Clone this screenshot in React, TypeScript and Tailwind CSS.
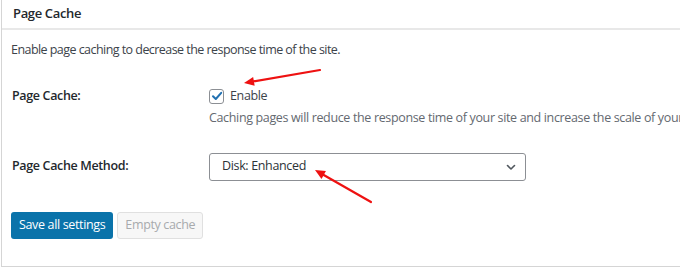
import React from "react";

function Arrow({ x1, y1, x2, y2 }: { x1: number; y1: number; x2: number; y2: number }) {
  // arrowhead at (x2, y2)
  const ang = Math.atan2(y2 - y1, x2 - x1);
  const len = 11;
  const spread = 0.42;
  const ax = x2 - len * Math.cos(ang - spread);
  const ay = y2 - len * Math.sin(ang - spread);
  const bx = x2 - len * Math.cos(ang + spread);
  const by = y2 - len * Math.sin(ang + spread);
  return (
    <g>
      <line x1={x1} y1={y1} x2={x2 - 6 * Math.cos(ang)} y2={y2 - 6 * Math.sin(ang)} stroke="#ee1111" strokeWidth={2.2} strokeLinecap="round" />
      <polygon points={`${x2},${y2} ${ax},${ay} ${bx},${by}`} fill="#ee1111" />
    </g>
  );
}

export default function App() {
  return (
    <div
      className="relative w-[680px] h-[268px] overflow-hidden bg-white text-[12.5px] tracking-[-0.35px] text-[#3c434a]"
      style={{ fontFamily: '"Open Sans", "Noto Sans", sans-serif' }}
    >
      <div className="ml-px w-[760px] h-[267px] border-l border-b border-[#d5d5d5]">
        <div className="h-[30px] border-b-2 border-[#e8e8e8] pl-[11px] flex items-center">
          <h3 className="text-[13px] font-semibold text-[#23282d]">Page Cache</h3>
        </div>

        <p className="pl-[9px] pt-[11px] leading-[18px] tracking-[-0.55px]">
          Enable page caching to decrease the response time of the site.
        </p>

        <div className="flex mt-[28px]">
          <div className="w-[207px] shrink-0 pl-[10px] font-semibold text-[#23282d]">Page Cache:</div>
          <div className="flex flex-col min-w-0">
            <label className="flex items-center gap-[6px] h-[18px]">
              <span className="w-[15px] h-[15px] rounded-[3px] border border-[#8c8f94] flex items-center justify-center">
                <svg width="12" height="12" viewBox="0 0 12 12">
                  <path d="M2 6.2 L4.8 9 L10.2 2.8" fill="none" stroke="#2271b1" strokeWidth="2" strokeLinecap="round" strokeLinejoin="round" />
                </svg>
              </span>
              <span>Enable</span>
            </label>
            <p className="mt-[4px] text-[#646970] whitespace-nowrap">
              Caching pages will reduce the response time of your site and increase the scale of your web server.
            </p>
          </div>
        </div>

        <div className="flex items-center mt-[25px]">
          <div className="w-[207px] shrink-0 pl-[10px] font-semibold text-[#23282d]">Page Cache Method:</div>
          <div className="w-[317px] h-[28px] rounded-[3px] border border-[#8c8f94] flex items-center justify-between pl-[12px] pr-[8px] text-[#2c3338]">
            <span>Disk: Enhanced</span>
            <svg width="12" height="12" viewBox="0 0 12 12">
              <path d="M2.5 4.5 L6 8 L9.5 4.5" fill="none" stroke="#50575e" strokeWidth="1.6" strokeLinecap="round" strokeLinejoin="round" />
            </svg>
          </div>
        </div>

        <div className="flex gap-[4px] pl-[9px] mt-[31px]">
          <button className="h-[27px] px-[8px] rounded-[3px] bg-[#0a73aa] text-white">
            Save all settings
          </button>
          <button className="h-[27px] px-[7px] rounded-[3px] bg-[#f7f7f7] border border-[#e0e0e0] text-[#a7aaad]">
            Empty cache
          </button>
        </div>
      </div>

      <svg className="absolute left-0 top-0 pointer-events-none" width="680" height="268">
        <Arrow x1={320} y1={70} x2={244} y2={83} />
        <Arrow x1={371} y1={202} x2={315} y2={170} />
      </svg>
    </div>
  );
}
